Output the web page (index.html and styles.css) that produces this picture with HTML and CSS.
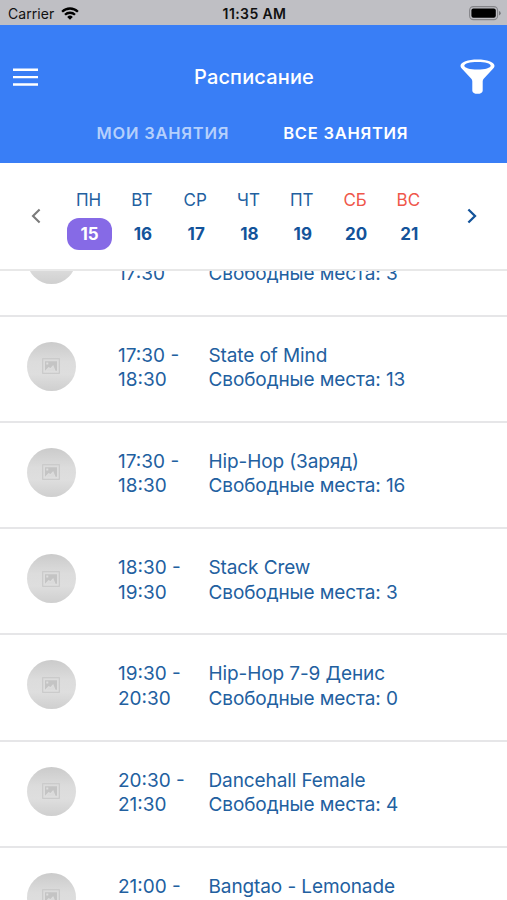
FILE: index.html
```html
<!DOCTYPE html>
<html lang="ru">
<head>
<meta charset="utf-8">
<title>Расписание</title>
<link rel="stylesheet" href="styles.css">
</head>
<body>
<svg class="defs" width="0" height="0" aria-hidden="true">
  <symbol id="photo" viewBox="0 0 18 16">
    <rect x="0.7" y="0.7" width="16.6" height="14.6" fill="none" stroke="#c8c8c8" stroke-width="1.100"/>
    <path d="M3 3.200h12v9.600h-1.500L11.200 7 8.500 10 6.500 9 3 12.800z" fill="#c4c4c4"/>
    <path d="M4.300 4.500h2v2h-2z" fill="#dedede"/>
    <path d="M4.500 12.800L7 10.200l1.800 1.200 2.300-2.800 1.500 4.200z" fill="#dadada"/>
  </symbol>
</svg>
<div class="status">
  <div class="carrier"><span>Carrier</span>
    <svg width="18" height="13" viewBox="0 0 18 13"><g fill="none" stroke="#000" stroke-width="2.300"><path d="M1.100 4.700a11.300 11.300 0 0 1 15.800 0"/><path d="M4 7.800a7.100 7.100 0 0 1 10 0"/></g><path d="M9 12.700L6.200 9.900a4 4 0 0 1 5.600 0z"/></svg>
  </div>
  <div class="clock">11:35 AM</div>
  <svg class="battery" width="32" height="15" viewBox="0 0 32 15"><rect x="0.600" y="0.600" width="28" height="13" rx="3.800" fill="none" stroke="#858589" stroke-width="1.100"/><rect x="2.400" y="2.400" width="24.400" height="9.400" rx="2" /><path d="M30 5v4.400q1.700-.6 1.700-2.200T30 5z" fill="#77777b"/></svg>
</div>
<header class="header">
  <div class="bar">
    <svg class="menu" width="25" height="19" viewBox="0 0 25 19"><path d="M0 1.700h25M0 9.100h25M0 16.500h25" stroke="#fff" stroke-width="2.400"/></svg>
    <h1 class="title">Расписание</h1>
    <svg class="filter" width="35" height="36" viewBox="0 0 35 36"><path fill="#fff" fill-rule="evenodd" d="M17.500.4C8 .4.500 3.100.500 6.700c0 1.400.9 2.500 2.200 3.700l8.600 9.300c.7.800 1 1.600 1 2.700v9.300c0 2 2.300 3.100 5.200 3.100s5.200-1.100 5.200-3.100v-9.300c0-1.100.3-1.900 1-2.700l8.600-9.300c1.300-1.200 2.200-2.300 2.200-3.700C34.500 3.100 27 .4 17.500.4zM17.500 3c7.700 0 13.200 1.600 13.200 3.700s-5.500 3.800-13.200 3.800S4.300 8.800 4.300 6.700 9.800 3 17.500 3z"/></svg>
  </div>
  <nav class="tabs">
    <span class="tab">МОИ ЗАНЯТИЯ</span>
    <span class="tab active">ВСЕ ЗАНЯТИЯ</span>
  </nav>
</header>
<section class="week">
  <svg class="prev" width="10" height="16" viewBox="0 0 10 16"><path d="M8.600 1.500L2 8l6.600 6.500" fill="none" stroke="#7b7b7b" stroke-width="2.100"/></svg>
  <div class="days">
    <div class="day selected"><span>ПН</span><b>15</b></div>
    <div class="day"><span>ВТ</span><b>16</b></div>
    <div class="day"><span>СР</span><b>17</b></div>
    <div class="day"><span>ЧТ</span><b>18</b></div>
    <div class="day"><span>ПТ</span><b>19</b></div>
    <div class="day weekend"><span>СБ</span><b>20</b></div>
    <div class="day weekend"><span>ВС</span><b>21</b></div>
  </div>
  <svg class="next" width="10" height="16" viewBox="0 0 10 16"><path d="M1.400 1.500L8 8l-6.600 6.500" fill="none" stroke="#13539a" stroke-width="2.300"/></svg>
</section>
<main class="list">
  <article class="row first"><div class="avatar"><svg><use href="#photo"/></svg></div><div class="time">17:30</div><div class="info">Свободные места: 3</div></article>
  <article class="row"><div class="avatar"><svg><use href="#photo"/></svg></div><div class="time">17:30 -<br>18:30</div><div class="info">State of Mind<br>Свободные места: 13</div></article>
  <article class="row"><div class="avatar"><svg><use href="#photo"/></svg></div><div class="time">17:30 -<br>18:30</div><div class="info">Hip-Hop (Заряд)<br>Свободные места: 16</div></article>
  <article class="row"><div class="avatar"><svg><use href="#photo"/></svg></div><div class="time">18:30 -<br>19:30</div><div class="info">Stack Crew<br>Свободные места: 3</div></article>
  <article class="row"><div class="avatar"><svg><use href="#photo"/></svg></div><div class="time">19:30 -<br>20:30</div><div class="info">Hip-Hop 7-9 Денис<br>Свободные места: 0</div></article>
  <article class="row"><div class="avatar"><svg><use href="#photo"/></svg></div><div class="time">20:30 -<br>21:30</div><div class="info">Dancehall Female<br>Свободные места: 4</div></article>
  <article class="row"><div class="avatar"><svg><use href="#photo"/></svg></div><div class="time">21:00 -</div><div class="info">Bangtao - Lemonade</div></article>
</main>
</body>
</html>
```
FILE: styles.css
```css
* { box-sizing: border-box; }
body {
  margin: 0;
  height: 900px;
  overflow: hidden;
  display: flex;
  flex-direction: column;
  background: #fff;
  color: #22609f;
  font-family: Inter, "Liberation Sans", sans-serif;
}
svg { display: block; }
.defs { position: absolute; }
.status {
  flex: none;
  height: 25px;
  padding: 1px 6px 0 8px;
  display: grid;
  grid-template-columns: 1fr auto 1fr;
  align-items: center;
  background: #bfbfc4;
  color: #111;
  font-size: 14px;
}
.carrier { display: flex; align-items: center; gap: 7px; letter-spacing: 0.05px; }
.clock { font-weight: 600; letter-spacing: 0.4px; }
.battery { justify-self: end; }
.header { flex: none; height: 138px; background: #397ef6; color: #fff; }
.bar {
  height: 84px;
  padding: 19px 12px 0 13px;
  display: grid;
  grid-template-columns: 1fr auto 1fr;
  align-items: center;
}
.title { margin: 0; padding-top: 1px; font-size: 20px; font-weight: 500; letter-spacing: 0.15px; }
.menu { margin-top: 1px; }
.filter { justify-self: end; }
.tabs { display: flex; justify-content: center; gap: 54px; padding-right: 2px; }
.tab {
  height: 48px;
  line-height: 48px;
  font-size: 16.500px;
  font-weight: 600;
  letter-spacing: 0.75px;
  color: #b5d0fc;
}
.tab.active { color: #fff; }
.week {
  flex: none;
  height: 108px;
  padding: 0 30px 0 31px;
  display: flex;
  align-items: center;
  justify-content: space-between;
  border-bottom: 2px solid #e8e8e8;
}
.days { display: grid; grid-template-columns: repeat(7, 53.300px); margin-left: 4px; margin-right: 13px; padding-top: 7px; }
.day { display: flex; flex-direction: column; align-items: center; font-size: 17px; }
.day span { line-height: 22px; margin-bottom: 7px; padding-right: 2px; }
.day b {
  width: 45px;
  height: 32px;
  line-height: 33px;
  text-align: center;
  border-radius: 12px;
  font-weight: 700;
  color: #13539a;
}
.weekend span { color: #ef574a; }
.selected b { background: #866ae6; color: #fff; }
.list { flex: 1; min-height: 0; overflow: hidden; }
.row {
  height: 106.300px;
  padding: 25px 0 0 26.500px;
  display: grid;
  grid-template-columns: 91.500px 90.500px 1fr;
  align-items: start;
  border-bottom: 2px solid #e6e6e8;
  font-size: 19px;
  line-height: 24.500px;
}
.time, .info { padding-top: 2px; }
.info { letter-spacing: -0.1px; }
.first { margin-top: -60.800px; }
.first .time, .first .info { padding-top: 27px; }
.avatar {
  width: 49px;
  height: 49px;
  border-radius: 50%;
  display: grid;
  place-items: center;
  background: linear-gradient(#cbcbcb, #dcdcdc 40%, #dedede 65%, #cfcfcf);
}
.avatar svg { width: 18px; height: 16px; }
.first .avatar svg { visibility: hidden; }
```
